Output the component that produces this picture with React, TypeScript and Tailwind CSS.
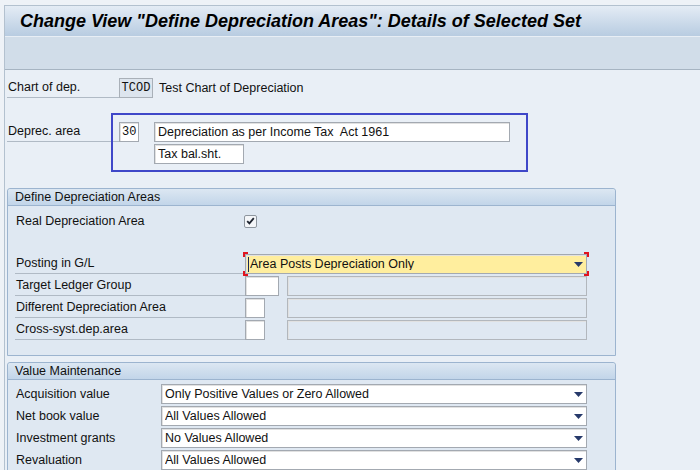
import clsx from 'clsx';

const inputBox = 'h-[20px] border border-[#a3a9b1] shadow-[inset_1px_1px_0_#e1e1e1]';

function Arrow() {
  return (
    <svg width="9" height="5" viewBox="0 0 9 5" className="shrink-0">
      <path d="M0 0h9L4.5 5z" fill="#26396a" />
    </svg>
  );
}

function Dropdown({
  value,
  className,
  yellow = false,
  cursor = false,
}: {
  value: string;
  className?: string;
  yellow?: boolean;
  cursor?: boolean;
}) {
  return (
    <div
      className={clsx(
        inputBox,
        'flex items-center pl-[3px] pr-[3px]',
        yellow ? 'bg-[#ffee9e]' : 'bg-white',
        className,
      )}
    >
      {cursor && <span className="w-[1px] h-[15px] bg-[#18285a] mr-[1px] -ml-[1px]" />}
      <span className="flex-1 truncate">{value}</span>
      <Arrow />
    </div>
  );
}

function Label({ text, className, line = true }: { text: string; className: string; line?: boolean }) {
  return (
    <div
      className={clsx(
        'h-[20px] flex items-center pl-[1px] shrink-0',
        line && 'border-b border-[#b0bac5]',
        className,
      )}
    >
      {text}
    </div>
  );
}

function Brackets() {
  return (
    <>
      <span className="absolute -left-[2px] -top-[2px] w-[5px] h-[5px] border-l-2 border-t-2 border-[#e0141e]" />
      <span className="absolute -right-[2px] -top-[2px] w-[5px] h-[5px] border-r-2 border-t-2 border-[#e0141e]" />
      <span className="absolute -left-[2px] -bottom-[2px] w-[5px] h-[5px] border-l-2 border-b-2 border-[#e0141e]" />
      <span className="absolute -right-[2px] -bottom-[2px] w-[5px] h-[5px] border-r-2 border-b-2 border-[#e0141e]" />
    </>
  );
}

function GroupBox({ title, children, className }: { title: string; children: React.ReactNode; className?: string }) {
  return (
    <div className={clsx('ml-[2px] w-[609px] border border-[#9cb4cf] rounded-t-[3px] bg-[#dfe8f2]', className)}>
      <div className="h-[17px] flex items-center pl-[7px] bg-gradient-to-b from-[#dce7f2] to-[#c2d5e9] border-b border-[#9cb4cf] rounded-t-[3px]">
        {title}
      </div>
      {children}
    </div>
  );
}

const valueRows = [
  ['Acquisition value', 'Only Positive Values or Zero Allowed'],
  ['Net book value', 'All Values Allowed'],
  ['Investment grants', 'No Values Allowed'],
  ['Revaluation', 'All Values Allowed'],
];

export default function App() {
  return (
    <div className="w-[700px] h-[470px] overflow-hidden bg-[#eef2f7] pt-[5px] pl-[4px] font-['Liberation_Sans',Arial,sans-serif] text-[12.5px] leading-none text-[#111]">
      <div className="h-[465px] border-l border-t border-[#b3c1cf] flex flex-col bg-[#e9eff6]">
        {/* title */}
        <div className="h-[30px] shrink-0 flex items-center pl-[15px] bg-gradient-to-b from-[#e4ecf5] to-[#b8cce1]">
          <h1 className="text-[18px] font-bold italic text-black">
            Change View "Define Depreciation Areas": Details of Selected Set
          </h1>
        </div>
        {/* toolbar */}
        <div className="h-[34px] shrink-0 bg-[#d1dde9] border-t border-[#e8eef5] border-b border-b-[#a6b4c2]" />

        {/* header fields */}
        <div className="mt-[8px] ml-[2px] flex items-center h-[20px]">
          <Label text="Chart of dep." className="w-[112px]" />
          <div className="h-[20px] w-[34px] flex items-center justify-center bg-[#dde5ee] border border-[#a9b0b8] font-['Liberation_Mono',monospace] text-[12px]">
            TCOD
          </div>
          <span className="ml-[6px]">Test Chart of Depreciation</span>
        </div>

        <div className="relative mt-[24px] ml-[2px]">
          <div className="flex items-center h-[20px]">
            <Label text="Deprec. area" className="w-[112px]" />
            <div className={clsx(inputBox, 'w-[20px] bg-white flex items-center pl-[2px] text-[12px] font-["Liberation_Mono",monospace]')}>30</div>
            <div className={clsx(inputBox, 'ml-[15px] w-[356px] bg-white flex items-center pl-[3px]')}>
              Depreciation as per Income Tax&nbsp; Act 1961
            </div>
          </div>
          <div className={clsx(inputBox, 'mt-[2px] ml-[147px] w-[90px] bg-white flex items-center pl-[3px]')}>
            Tax bal.sht.
          </div>
          <div className="absolute left-[104px] -top-[9px] w-[417px] h-[59px] border-2 border-[#3f47c8]" />
        </div>

        {/* Define Depreciation Areas */}
        <GroupBox title="Define Depreciation Areas" className="mt-[24px]">
          <div className="pl-[7px] pb-[15px]">
            <div className="mt-[5px] flex items-center h-[20px]">
              <Label text="Real Depreciation Area" className="w-[229px]" line={false} />
              <div className="w-[13px] h-[13px] rounded-[2px] border border-[#8e969f] bg-[#f4f6f9] flex items-center justify-center">
                <svg width="9" height="8" viewBox="0 0 9 8">
                  <path d="M1.2 4.2 3.4 6.4 7.8 1.2" fill="none" stroke="#1e2430" strokeWidth="1.8" />
                </svg>
              </div>
            </div>
            <div className="mt-[23px] flex items-center h-[20px]">
              <Label text="Posting in G/L" className="w-[230px]" />
              <div className="relative">
                <Dropdown value="Area Posts Depreciation Only" className="w-[342px]" yellow cursor />
                <Brackets />
              </div>
            </div>
            <div className="mt-[2px] flex items-center h-[20px]">
              <Label text="Target Ledger Group" className="w-[230px]" />
              <div className={clsx(inputBox, 'w-[34px] bg-white')} />
              <div className={clsx(inputBox, 'ml-[8px] w-[300px] bg-[#dfe8f2] border-[#b2b7bd]')} />
            </div>
            <div className="mt-[2px] flex items-center h-[20px]">
              <Label text="Different Depreciation Area" className="w-[230px]" />
              <div className={clsx(inputBox, 'w-[20px] bg-white')} />
              <div className={clsx(inputBox, 'ml-[22px] w-[300px] bg-[#dfe8f2] border-[#b2b7bd]')} />
            </div>
            <div className="mt-[2px] flex items-center h-[20px]">
              <Label text="Cross-syst.dep.area" className="w-[230px]" />
              <div className={clsx(inputBox, 'w-[20px] bg-white')} />
              <div className={clsx(inputBox, 'ml-[22px] w-[300px] bg-[#dfe8f2] border-[#b2b7bd]')} />
            </div>
          </div>
        </GroupBox>

        {/* Value Maintenance */}
        <GroupBox title="Value Maintenance" className="mt-[6px]">
          <div className="pl-[7px] pt-[4px] flex flex-col gap-[2px]">
            {valueRows.map(([label, value]) => (
              <div key={label} className="flex items-center h-[20px]">
                <Label text={label} className="w-[146px]" line={false} />
                <Dropdown value={value} className="w-[426px]" />
              </div>
            ))}
          </div>
        </GroupBox>
      </div>
    </div>
  );
}
